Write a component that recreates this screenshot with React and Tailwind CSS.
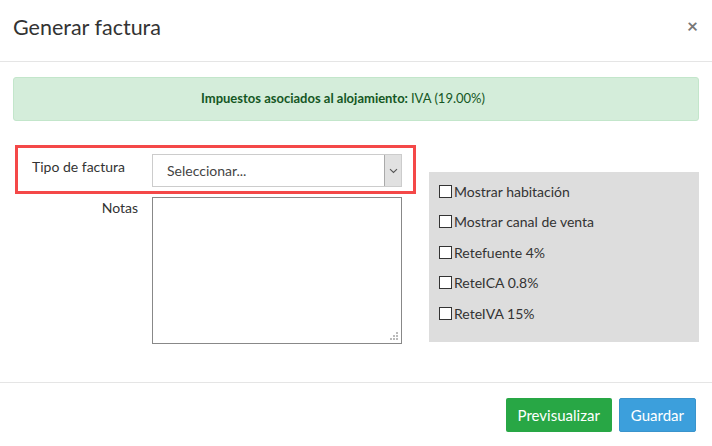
import React from 'react';

const opciones = [
  'Mostrar habitación',
  'Mostrar canal de venta',
  'Retefuente 4%',
  'ReteICA 0.8%',
  'ReteIVA 15%',
];

const App = () => {
  return (
    <div className="w-[712px] h-[446px] bg-white text-[#333] flex flex-col" style={{ fontFamily: 'Lato, "Open Sans", sans-serif' }}>
      {/* Header */}
      <div className="h-[62px] border-b border-[#e5e5e5] flex items-center justify-between pl-[13px] pr-[14px]">
        <h2 className="text-[21.5px] font-normal text-[#333] -mt-[7px]">Generar factura</h2>
        <button type="button" className="text-[#777] text-[19px] leading-none -mt-[10px] font-bold">×</button>
      </div>

      {/* Body */}
      <div className="px-[13px] pt-[15px]">
        <div className="h-[44px] bg-[#d4edda] border border-[#c3e6cb] rounded-[3px] flex items-center justify-center pr-[26px] text-[13px] text-[#155724]">
          <span className="font-bold">Impuestos asociados al alojamiento:</span>
          <span className="ml-[3px]">IVA (19.00%)</span>
        </div>

        <div className="flex items-start">
          <div className="ml-[2px] mt-[24px] w-[401px]">
            <div className="h-[49px] border-[3px] border-[#f44848] flex items-start">
              <label className="w-[134px] pl-[14px] pt-[8px] text-[14px]">Tipo de factura</label>
              <div className="mt-[6px] w-[250px] h-[33px] border border-[#ccc] bg-white flex items-stretch">
                <div className="flex-1 pl-[14px] flex items-center text-[14px] text-[#444]">Seleccionar...</div>
                <div className="w-[17px] bg-[#e1e1e1] border-l border-[#aaa] flex items-center justify-center">
                  <svg width="9" height="6" viewBox="0 0 9 6" fill="none">
                    <path d="M1 1.2 L4.5 4.5 L8 1.2" stroke="#555" strokeWidth="1.1" />
                  </svg>
                </div>
              </div>
            </div>
            <div className="flex items-start mt-[3px]">
              <label className="w-[123px] text-right text-[14px]">Notas</label>
              <div className="ml-[14px] relative w-[250px] h-[147px] border border-[#888] bg-white">
                <textarea className="w-full h-full resize-none outline-none p-2 text-[14px]" />
                <svg className="absolute right-[3px] bottom-[3px]" width="8" height="8" viewBox="0 0 8 8">
                  <rect x="6" y="0" width="2" height="2" fill="#bbb" />
                  <rect x="3" y="3" width="2" height="2" fill="#bbb" />
                  <rect x="6" y="3" width="2" height="2" fill="#bbb" />
                  <rect x="0" y="6" width="2" height="2" fill="#bbb" />
                  <rect x="3" y="6" width="2" height="2" fill="#bbb" />
                  <rect x="6" y="6" width="2" height="2" fill="#bbb" />
                </svg>
              </div>
            </div>
          </div>

          <div className="ml-[13px] mt-[51px] w-[270px] h-[170px] bg-[#dddddd] pl-[10px] pt-[10px] flex flex-col gap-[12px]">
            {opciones.map((op) => (
              <label key={op} className="flex items-center text-[14px] text-[#333] h-[18.5px]">
                <span className="w-[13px] h-[13px] border border-[#333] bg-white mr-[2px]" />
                {op}
              </label>
            ))}
          </div>
        </div>
      </div>

      {/* Footer */}
      <div className="mt-[38px] border-t border-[#e5e5e5] flex justify-end gap-[7px] pr-[16px] pt-[15px]">
        <button type="button" className="h-[34px] px-[12px] bg-[#28a745] text-white text-[15px] rounded-[2px]">Previsualizar</button>
        <button type="button" className="h-[34px] px-[11px] bg-[#3c9fdc] text-white text-[15px] rounded-[2px] border border-[#3a94cc]">Guardar</button>
      </div>
    </div>
  );
};

export default App;
